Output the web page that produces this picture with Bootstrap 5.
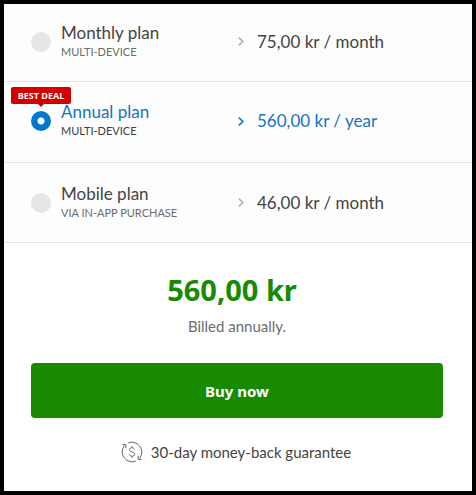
<!DOCTYPE html>
<html lang="en">
<head>
<meta charset="utf-8">
<meta name="viewport" content="width=device-width, initial-scale=1">
<title>Choose a plan</title>
<link href="https://cdn.jsdelivr.net/npm/bootstrap@5.3.0/dist/css/bootstrap.min.css" rel="stylesheet">
<style>
  body { font-family: "Lato", "Open Sans", sans-serif; color: #444; background: #fff; }
  .checkout { border: 4px solid #000; }
  .plan { min-height: 81px; background: #fdfdfd; border-bottom: 1px solid #e4e4e4; cursor: pointer; padding-bottom: 2px; }
  .plan:first-child { min-height: 78px; }
  .plan:last-child { min-height: 80px; padding-bottom: 0; }
  .plan-main { padding-left: 27px; gap: 10px; }
  .plan-radio.form-check-input { width: 20px; height: 20px; margin: 0; border: 0; background: #e6e6e6; box-shadow: none; }
  .plan-radio.form-check-input:checked { background: radial-gradient(circle, #fff 0 3px, #0078d0 4px); }
  .plan-name { font-size: 17px; line-height: 20px; }
  .plan-note { font-size: 11px; line-height: 18px; color: #6c6c6c; }
  .plan-price { font-size: 17px; line-height: 20px; gap: 13px; }
  .chevron { width: 6px; height: 9px; color: #b0b0b0; }
  .plan:has(:checked) .plan-name, .plan:has(:checked) .plan-price, .plan:has(:checked) .chevron { color: #1474c4; }
  .plan:has(:checked) .plan-note { color: #3c3c3c; }
  .deal { left: 7px; top: 5px; width: 60px; height: 17px; border-radius: 2px; background: #d40000; color: #fff; font: 700 9px/17px "Open Sans", sans-serif; }
  .deal::after { content: ""; position: absolute; left: 27px; top: 17px; border: 3px solid transparent; border-top-color: #d40000; border-bottom: 0; }
  .summary { padding: 29px 29px 28px 27px; }
  .total { font: 700 29px/36px "Noto Sans", sans-serif; color: #188a00; padding-right: 10px; }
  .billing { font-size: 15px; line-height: 20px; color: #6c6c6c; margin-top: 8px; }
  .buy.btn { height: 55px; margin-top: 27px; border: 0; border-radius: 4px; background: #188a00; color: #fff; font: 700 15px/20px "Noto Sans", sans-serif; }
  .guarantee { gap: 8px; margin-top: 23px; padding-right: 2px; font-size: 15px; line-height: 22px; }
</style>
<script src="https://cdn.jsdelivr.net/npm/bootstrap@5.3.0/dist/js/bootstrap.bundle.min.js"></script>
</head>
<body>
<form class="checkout">
  <div>
    <label class="plan d-flex align-items-center position-relative" for="monthly">
      <span class="plan-main w-50 d-flex align-items-center">
        <input class="plan-radio form-check-input flex-shrink-0" type="radio" name="plan" id="monthly">
        <span><span class="plan-name d-block">Monthly plan</span><span class="plan-note d-block">MULTI-DEVICE</span></span>
      </span>
      <span class="plan-price w-50 d-flex align-items-center">
        <svg class="chevron" viewBox="0 0 6 9" fill="none" stroke="currentColor" stroke-width="1.6" aria-hidden="true"><path d="M.8.7 4.8 4.5.8 8.3"/></svg>
        <span>75,00 kr / month</span>
      </span>
    </label>
    <label class="plan d-flex align-items-center position-relative" for="annual">
      <span class="deal position-absolute text-center">BEST DEAL</span>
      <span class="plan-main w-50 d-flex align-items-center">
        <input class="plan-radio form-check-input flex-shrink-0" type="radio" name="plan" id="annual" checked>
        <span><span class="plan-name d-block">Annual plan</span><span class="plan-note d-block">MULTI-DEVICE</span></span>
      </span>
      <span class="plan-price w-50 d-flex align-items-center">
        <svg class="chevron" viewBox="0 0 6 9" fill="none" stroke="currentColor" stroke-width="1.6" aria-hidden="true"><path d="M.8.7 4.8 4.5.8 8.3"/></svg>
        <span>560,00 kr / year</span>
      </span>
    </label>
    <label class="plan d-flex align-items-center position-relative" for="mobile">
      <span class="plan-main w-50 d-flex align-items-center">
        <input class="plan-radio form-check-input flex-shrink-0" type="radio" name="plan" id="mobile">
        <span><span class="plan-name d-block">Mobile plan</span><span class="plan-note d-block">VIA IN-APP PURCHASE</span></span>
      </span>
      <span class="plan-price w-50 d-flex align-items-center">
        <svg class="chevron" viewBox="0 0 6 9" fill="none" stroke="currentColor" stroke-width="1.6" aria-hidden="true"><path d="M.8.7 4.8 4.5.8 8.3"/></svg>
        <span>46,00 kr / month</span>
      </span>
    </label>
  </div>
  <div class="summary text-center">
    <div class="total">560,00 kr</div>
    <div class="billing">Billed annually.</div>
    <button class="buy btn w-100" type="button">Buy now</button>
    <div class="guarantee d-flex align-items-center justify-content-center">
      <svg width="22" height="22" viewBox="0 0 22 22" fill="none" stroke="#626271" aria-hidden="true">
        <path d="M7.2 1.9A10 10 0 0 1 18.6 17.5M14.8 20.1A10 10 0 0 1 3.4 4.5"/>
        <path d="M1.4 3.7h3.4v3.5M20.6 18.3h-3.4v-3.5"/>
        <path d="M13.6 8.5C13.3 7.3 12.4 6.8 11 6.8c-1.6 0-2.6.8-2.6 2 0 2.9 5.3 1.4 5.3 4.3 0 1.3-1.1 2.1-2.7 2.1s-2.6-.7-2.8-2M11 5.2v1.6M11 15.2v1.6" stroke-width=".9"/>
      </svg>
      <span>30-day money-back guarantee</span>
    </div>
  </div>
</form>
</body>
</html>
